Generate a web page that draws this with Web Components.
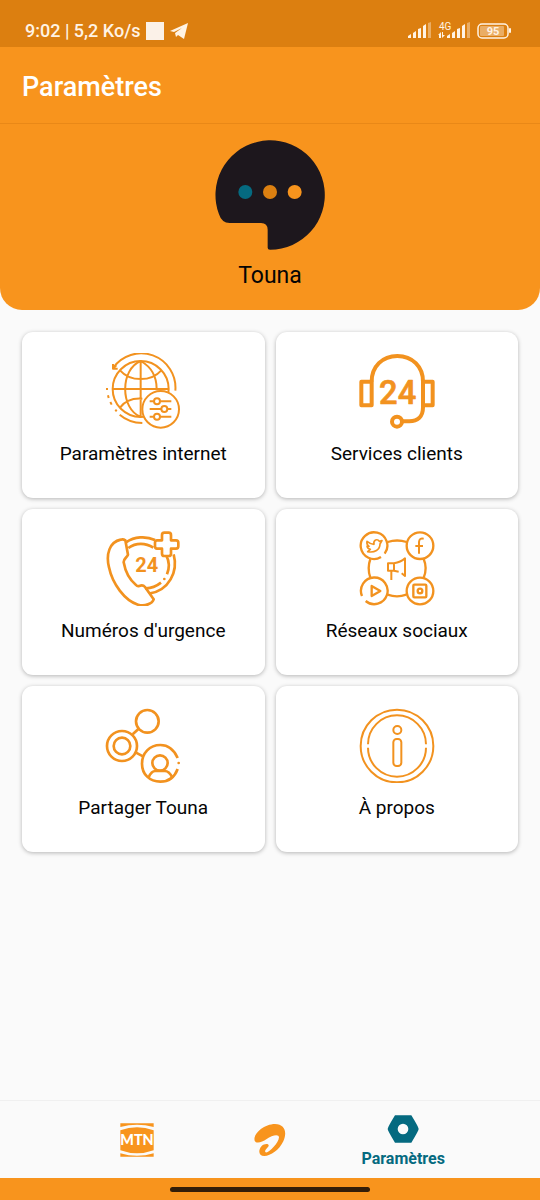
<!DOCTYPE html>
<html lang="fr">
<head>
<meta charset="utf-8">
<meta name="viewport" content="width=device-width, initial-scale=1">
<title>Touna</title>
<style>
  body {
    margin: 0;
    font-family: Roboto, "Liberation Sans", sans-serif;
    color: #050505;
    background-color: #fafafa;
    --orange: #f8941d;
    --orange-dark: #dc7f10;
    --teal: #056a80;
  }
</style>
</head>
<body>
<settings-screen></settings-screen>

<script>
const icons = {
  globe: {
    viewBox: '46 39 228 228',
    body: `
      <g stroke-width="6">
        <circle cx="153" cy="147" r="84"/>
        <path d="M153 63V231M69 147H237M153 63C91 88 91 206 153 231M153 63C187 82 201 112 201 147
          M91 91C122 126 184 126 215 91M91 203C107 181 130 174 158 176"/>
        <path d="M257 152A103 103 0 0 0 70 84M70 72V86H84M70 86L80 76"/>
        <path d="M52 144V150M55 166L57 174M62 186L66 194M77 209L81 214M90 224Q118 248 158 249"/>
        <circle cx="213" cy="208" r="55" fill="#fff"/>
        <path d="M180 184H192M212 184H245M180 207H214M234 207H245M180 230H192M212 230H245"/>
        <circle cx="202" cy="184" r="9"/>
        <circle cx="224" cy="207" r="9"/>
        <circle cx="202" cy="230" r="9"/>
      </g>`
  },
  headset: {
    viewBox: '56 39 228 228',
    body: `
      <g stroke-width="12">
        <path d="M94 125C94 80 126 48 171 48S248 80 248 125V202C248 230 232 244 207 244H186"/>
        <rect x="63" y="125" width="31" height="71"/>
        <rect x="248" y="125" width="29" height="71"/>
        <circle cx="170" cy="245" r="15"/>
      </g>
      <text x="172" y="192" font-size="98" font-weight="500" class="rounded">24</text>`
  },
  emergency: {
    viewBox: '46 30 228 228',
    body: `
      <g stroke-width="8">
        <path d="M93 59C60 66 48 102 58 142C68 191 105 242 145 254C166 260 188 251 192 238L166 201
          C160 194 154 196 149 198Q143 200 139 195C118 178 107 155 102 127C101 116 113 112 115 104L107 61Q100 56 93 59Z"/>
        <path d="M109 67C134 50 168 47 196 60M252 103C266 155 238 212 178 221"/>
        <path d="M116 84C139 67 168 68 191 83M230 107C240 126 240 143 232 163M166 205C185 206 200 199 214 188"/>
        <path d="M217 45Q217 38 224 38H237Q244 38 244 45V61H259Q266 61 266 68V79Q266 86 259 86H244V101
          Q244 108 237 108H224Q217 108 217 101V86H202Q196 86 196 79V68Q196 61 202 61H217Z"/>
      </g>
      <circle cx="224" cy="177" r="4" class="solid"/>
      <text x="171" y="155" font-size="60" font-weight="700">24</text>`
  },
  social: {
    viewBox: '56 30 228 228',
    body: `
      <g stroke-width="7">
        <path d="M142 66Q170 57 199 66M90 117Q80 145 90 173M250 117Q262 145 250 173M142 224Q170 234 198 224"/>
        <path d="M122 111A40 40 0 1 1 133 101"/>
        <circle cx="239" cy="77" r="40"/>
        <circle cx="239" cy="213" r="40"/>
        <path d="M65 228A40 40 0 1 1 76 243"/>
        <path d="M94 198L120 213L94 228Z"/>
        <rect x="219" y="194" width="39" height="38" rx="3"/>
        <circle cx="239" cy="213" r="7"/>
        <path d="M250 56Q237 53 236 66V101M225 78H248" stroke-width="6"/>
        <path d="M80 64Q91 73 101 73C98 58 112 56 117 64L125 62L119 72C119 89 103 99 82 95
          L90 88Q81 86 80 78L86 79Q78 73 80 64Z" stroke-width="5"/>
        <path d="M143 130H161V152H143ZM161 130Q181 127 194 115V168L184 160M161 152L175 155M153 152V180" stroke-width="6"/>
      </g>`
  },
  share: {
    viewBox: '46 33 228 228',
    body: `
      <g stroke-width="8">
        <circle cx="173" cy="76" r="34"/>
        <circle cx="97" cy="150" r="45"/>
        <circle cx="97" cy="150" r="25"/>
        <path d="M129 115L147 98M139 170L160 181"/>
        <path d="M264 186C253 161 237 147 212 147C180 147 157 171 157 203S180 257 212 257C239 257 255 243 264 219"/>
        <circle cx="211" cy="201" r="23"/>
        <path d="M177 244Q185 225 197 225H225Q239 225 247 244"/>
      </g>
      <circle cx="267" cy="201" r="4" class="solid"/>`
  },
  info: {
    viewBox: '56 33 228 228',
    body: `
      <g stroke-width="6">
        <circle cx="170" cy="150" r="109"/>
        <path d="M83 145A87 87 0 0 1 257 145M83 155A87 87 0 0 0 257 155"/>
        <circle cx="171" cy="102" r="12"/>
        <rect x="159" y="129" width="24" height="81" rx="10"/>
      </g>`
  },
  mtn: {
    viewBox: '87 94 108 108',
    body: `
      <path class="solid" d="M91 98H191V109Q141 95 91 109ZM91 119Q141 101 191 119V179Q141 197 91 179ZM91 188Q141 203 191 188V198H91Z"/>
      <text x="141" y="164" font-size="43" font-weight="900" font-family="Lato, sans-serif" class="light">MTN</text>`
  },
  airtel: {
    viewBox: '486 94 108 108',
    body: `
      <path class="solid" d="M494 150C488 130 522 100 555 100C585 101 592 125 580 152C568 178 542 196 523 196
        C505 196 504 178 515 166C522 159 535 158 536 164C537 170 522 178 526 184C532 192 566 158 567 140
        C567 128 545 134 530 145C515 156 498 160 494 150Z"/>`
  },
  nut: {
    viewBox: '222 61 108 108',
    body: `
      <path class="solid" fill-rule="evenodd" d="M252 74H301Q323 110 323 115Q323 120 301 156H252Q230 120 230 115
        Q230 110 252 74ZM276 99A16 16 0 1 0 276 131A16 16 0 1 0 276 99Z"/>`
  }
};

class AppIcon extends HTMLElement {
  constructor() {
    super();
    this.root = this.attachShadow({ mode: 'open' });
  }

  connectedCallback() {
    const icon = icons[this.getAttribute('name')];
    this.root.innerHTML = `
      <style>
        :host {
          display: block;
          width: 76px;
          height: 76px;
          color: #f2921f;
        }
        :host([small]) {
          width: 36px;
          height: 36px;
          color: var(--orange);
        }
        :host([name="nut"]) {
          color: var(--teal);
        }
        svg {
          display: block;
          width: 100%;
          height: 100%;
          fill: none;
          stroke: currentColor;
          stroke-linejoin: round;
        }
        text {
          fill: currentColor;
          text-anchor: middle;
          stroke-width: 0;
        }
        .rounded {
          stroke-width: 2;
        }
        .solid {
          fill: currentColor;
          stroke: none;
        }
        .light {
          fill: #fff;
        }
      </style>
      <svg viewBox="${icon.viewBox}" aria-hidden="true">${icon.body}</svg>
    `;
  }
}

class StatusBar extends HTMLElement {
  constructor() {
    super();
    this.attachShadow({ mode: 'open' }).innerHTML = `
      <style>
        :host {
          display: flex;
          align-items: center;
          justify-content: space-between;
          box-sizing: border-box;
          height: 47px;
          padding: 14px 28px 0 25px;
          color: #fff3e4;
          background-color: var(--orange-dark);
          font-size: 18px;
          font-weight: 500;
        }
        .left, .right {
          display: flex;
          align-items: center;
        }
        .left {
          gap: 6px;
        }
        .right {
          gap: 6px;
        }
        .square {
          width: 18px;
          height: 18px;
          background-color: #fbf1e8;
        }
        svg {
          display: block;
          fill: currentColor;
        }
        text {
          font-size: 10px;
          font-weight: 400;
        }
        .level {
          font-size: 11px;
          font-weight: 700;
          text-anchor: middle;
        }
      </style>
      <div class="left">
        <span>9:02 | 5,2 Ko/s</span>
        <span class="square"></span>
        <svg width="18" height="16" viewBox="0 0 18 16">
          <path d="M0 8L18 0L14 16L8 12L6 14L5 10L12 5L4 9Z"/>
        </svg>
      </div>
      <div class="right">
        <svg width="24" height="22" viewBox="0 -2 24 22">
          <path d="M0 16V14L3 12V16ZM5 16V11L8 9V16ZM10 16V7L13 6V16ZM15 16V4L18 2V16Z"/>
          <path d="M20 16V1L23 0V16Z" opacity=".4"/>
        </svg>
        <svg width="33" height="22" viewBox="0 -2 33 22">
          <text x="1" y="8">4G</text>
          <path d="M0 13L3 10V16H1V13ZM4 10H5V13H7L4 16Z"/>
          <path d="M9 16V14L12 12V16ZM14 16V11L17 9V16ZM19 16V7L22 6V16ZM24 16V4L27 2V16Z"/>
          <path d="M29 16V1L32 0V16Z" opacity=".4"/>
        </svg>
        <svg width="35" height="22" viewBox="0 -2 35 22">
          <rect x="1" y="2" width="30" height="14" rx="4" fill="none" stroke="currentColor" stroke-width="1.500"/>
          <rect x="3" y="4" width="24" height="10" rx="1" opacity=".4"/>
          <rect x="32" y="6" width="2" height="5" rx="1"/>
          <text class="level" x="16" y="13">95</text>
        </svg>
      </div>
    `;
  }
}

class AppHeader extends HTMLElement {
  constructor() {
    super();
    this.attachShadow({ mode: 'open' }).innerHTML = `
      <style>
        :host {
          display: block;
        }
        .bar {
          display: flex;
          align-items: center;
          height: 77px;
          padding: 4px 22px 0;
          box-sizing: border-box;
          color: #fff;
          background-color: var(--orange);
          border-bottom: 1px solid #e98817;
        }
        h1 {
          margin: 0;
          font-size: 27px;
          font-weight: 500;
        }
        .hero {
          display: flex;
          flex-direction: column;
          align-items: center;
          gap: 12px;
          padding: 16px 0 20px;
          background-color: var(--orange);
          border-radius: 0 0 22px 22px;
          font-size: 23px;
          line-height: 28px;
        }
        svg {
          display: block;
        }
      </style>
      <header class="bar"><h1><slot name="title"></slot></h1></header>
      <div class="hero">
        <svg width="110" height="110" viewBox="76 31 330 330" aria-hidden="true">
          <path fill="#1d171d" d="M241 360A164 164 0 1 0 88 254Q96 280 120 280H214Q234 281 234 300V354Q234 360 241 360Z"/>
          <circle cx="167" cy="187" r="21" fill="#056a80"/>
          <circle cx="241" cy="187" r="21" fill="#dc8011"/>
          <circle cx="315" cy="187" r="21" fill="#f8941d"/>
        </svg>
        <slot></slot>
      </div>
    `;
  }
}

class SettingsCard extends HTMLElement {
  constructor() {
    super();
    this.attachShadow({ mode: 'open' }).innerHTML = `
      <style>
        :host {
          display: block;
        }
        button {
          display: flex;
          flex-direction: column;
          align-items: center;
          gap: 13px;
          width: 100%;
          padding: 21px 0 32px;
          border: 0;
          border-radius: 11px;
          color: inherit;
          background-color: #fff;
          box-shadow: 0 1px 4px rgba(0,0,0,0.28);
          font: inherit;
          font-size: 19px;
          line-height: 24px;
        }
      </style>
      <button type="button">
        <slot name="icon"></slot>
        <span><slot></slot></span>
      </button>
    `;
  }
}

class NavItem extends HTMLElement {
  constructor() {
    super();
    this.attachShadow({ mode: 'open' }).innerHTML = `
      <style>
        :host {
          display: block;
          flex: 1;
        }
        a {
          display: flex;
          flex-direction: column;
          align-items: center;
          justify-content: center;
          gap: 2px;
          height: 100%;
          color: var(--teal);
          font-size: 16px;
          font-weight: 700;
          line-height: 20px;
          text-decoration: none;
        }
      </style>
      <a href="#"><slot name="icon"></slot><slot></slot></a>
    `;
    this.shadowRoot.querySelector('a').href = '#' + this.id;
    const label = this.getAttribute('label');
    if (label) {
      this.shadowRoot.querySelector('a').setAttribute('aria-label', label);
    }
  }
}

class BottomNav extends HTMLElement {
  constructor() {
    super();
    this.attachShadow({ mode: 'open' }).innerHTML = `
      <style>
        :host {
          display: block;
        }
        nav {
          display: flex;
          height: 77px;
          padding: 0 13%;
          border-top: 1px solid #f0f0f0;
        }
        .gesture {
          display: flex;
          align-items: center;
          justify-content: center;
          height: 22px;
          background-color: var(--orange);
        }
        .handle {
          width: 37%;
          height: 5px;
          border-radius: 3px;
          background-color: #331d08;
        }
      </style>
      <nav><slot></slot></nav>
      <div class="gesture"><div class="handle"></div></div>
    `;
  }
}

class SettingsScreen extends HTMLElement {
  constructor() {
    super();
    this.attachShadow({ mode: 'open' }).innerHTML = `
      <style>
        :host {
          display: flex;
          flex-direction: column;
          min-height: 100vh;
        }
        main {
          flex: 1;
          display: grid;
          grid-template-columns: 1fr 1fr;
          align-content: start;
          gap: 11px;
          padding: 22px;
        }
      </style>
      <status-bar></status-bar>
      <app-header><span slot="title">Paramètres</span>Touna</app-header>
      <main>
        <settings-card><app-icon slot="icon" name="globe"></app-icon>Paramètres internet</settings-card>
        <settings-card><app-icon slot="icon" name="headset"></app-icon>Services clients</settings-card>
        <settings-card><app-icon slot="icon" name="emergency"></app-icon>Numéros d'urgence</settings-card>
        <settings-card><app-icon slot="icon" name="social"></app-icon>Réseaux sociaux</settings-card>
        <settings-card><app-icon slot="icon" name="share"></app-icon>Partager Touna</settings-card>
        <settings-card><app-icon slot="icon" name="info"></app-icon>À propos</settings-card>
      </main>
      <bottom-nav>
        <nav-item id="mtn" label="MTN"><app-icon slot="icon" name="mtn" small></app-icon></nav-item>
        <nav-item id="airtel" label="Airtel"><app-icon slot="icon" name="airtel" small></app-icon></nav-item>
        <nav-item id="parametres"><app-icon slot="icon" name="nut" small></app-icon>Paramètres</nav-item>
      </bottom-nav>
    `;
  }
}

customElements.define('app-icon', AppIcon);
customElements.define('status-bar', StatusBar);
customElements.define('app-header', AppHeader);
customElements.define('settings-card', SettingsCard);
customElements.define('nav-item', NavItem);
customElements.define('bottom-nav', BottomNav);
customElements.define('settings-screen', SettingsScreen);
</script>
</body>
</html>
